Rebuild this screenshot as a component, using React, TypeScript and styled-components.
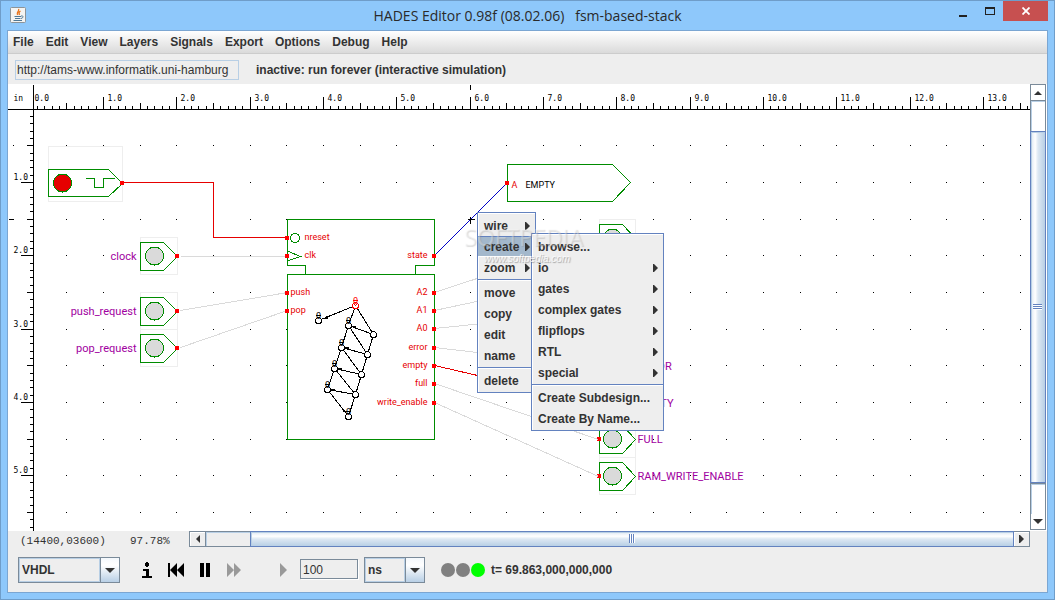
import React, { useLayoutEffect, useRef, useState } from "react";
import styled, { createGlobalStyle, css } from "styled-components";

const GlobalStyle = createGlobalStyle`
  *, *::before, *::after { box-sizing: border-box; }
  body { margin: 0; }
  button, input, select { font: inherit; color: inherit; margin: 0; padding: 0; border: 0; border-radius: 0; background: none; }
`;

const c = {
  frame: "#8ec8fb",
  frameLine: "#6f9dc9",
  panel: "#eeeeee",
  ink: "#333333",
  edge: "#7a8a99",
  accent: "#6382bf",
  soft: "#b8cfe5",
  highlight: "#a3b8cc",
  green: "#008c00",
  red: "#e60000",
  idle: "#dadada",
  label: "#a000a0",
};

/* ---------- window frame ---------- */

const Window = styled.div`
  display: flex;
  flex-direction: column;
  min-height: 100vh;
  padding: 0 6px 6px;
  background: ${c.frame};
  border: 1px solid ${c.frameLine};
  color: ${c.ink};
  font: bold 12px/16px "Liberation Sans", Arial, sans-serif;
`;

const TitleBar = styled.header`
  display: grid;
  grid-template-columns: 1fr auto 1fr;
  height: 29px;
`;

const AppIcon = styled.svg`
  margin: 6px 0 0 3px;
`;

const Title = styled.h1`
  margin: 0;
  color: #2a2a2a;
  font: 400 14px/30px "Open Sans", "Noto Sans", sans-serif;
  white-space: pre;
`;

const WindowButtons = styled.div`
  display: flex;
  justify-content: flex-end;
  height: 20px;
`;

const WindowButton = styled.button<{ $close?: boolean }>`
  display: flex;
  align-items: center;
  justify-content: center;
  width: ${(p) => (p.$close ? 45 : 27)}px;
  ${(p) => p.$close && "background: #c75050;"}
`;

const Content = styled.main`
  display: flex;
  flex: 1;
  flex-direction: column;
  background: ${c.panel};
  border: 1px solid #7ba6d2;
`;

const MenuBar = styled.nav`
  display: flex;
  gap: 12px;
  height: 23px;
  padding: 0 5px;
  background: linear-gradient(#ffffff, #dadada);
  border-bottom: 1px solid #cccccc;
`;

const MenuButton = styled.button`
  height: 21px;
`;

const AddressRow = styled.div`
  display: flex;
  align-items: center;
  gap: 17px;
  height: 30px;
  padding: 1px 0 0 7px;
`;

const AddressInput = styled.input`
  width: 224px;
  height: 20px;
  padding: 1px 1px 0;
  border: 1px solid ${c.soft};
  font-weight: 400;
`;

/* ---------- work area ---------- */

const WorkArea = styled.section`
  position: relative;
  display: flex;
  flex: 1;
  min-height: 200px;
  background: #ffffff;
`;

const Drawing = styled.svg`
  flex: 1;
  min-width: 0;
  overflow: hidden;
  shape-rendering: crispEdges;
  font: 400 11px Roboto, sans-serif;
`;

const Popup = styled.div<{ $x: number; $y: number; $width: number }>`
  position: absolute;
  left: ${(p) => p.$x}px;
  top: ${(p) => p.$y}px;
  width: ${(p) => p.$width}px;
  padding: 2px 0 1px;
  background: ${c.panel};
  border: 1px solid ${c.accent};
  box-shadow: inset 1px 1px #ffffff;
`;

const PopupItem = styled.button<{ $active?: boolean }>`
  display: flex;
  align-items: center;
  justify-content: space-between;
  width: 100%;
  height: 21px;
  padding: 0 5px 0 6px;
  white-space: nowrap;
  ${(p) =>
    p.$active &&
    css`
      background: ${c.highlight};
      box-shadow: inset 0 1px ${c.accent}, inset 0 -1px #ffffff;
    `}
`;

const PopupSeparator = styled.hr`
  height: 2px;
  margin: 1px 0;
  border: 0;
  border-top: 1px solid ${c.accent};
  background: #ffffff;
`;

const Watermark = styled.div`
  position: absolute;
  left: 456px;
  top: 140px;
  color: rgba(255, 255, 255, 0.3);
  font: 400 23px/26px "Open Sans", sans-serif;
  text-shadow: 1px 1px 1px rgba(120, 120, 120, 0.25);
  pointer-events: none;
`;

const WatermarkUrl = styled.div`
  padding-left: 20px;
  color: rgba(255, 255, 255, 0.8);
  font: italic 400 10px/18px "Liberation Sans", sans-serif;
  text-shadow: 1px 1px 1px rgba(90, 90, 90, 0.5);
`;

/* ---------- scroll bars ---------- */

const ScrollBar = styled.div<{ $vertical?: boolean }>`
  display: flex;
  border: 1px solid ${c.edge};
  ${(p) =>
    p.$vertical
      ? css`
          flex-direction: column;
          width: 16px;
          margin: 0 1px 1px 0;
        `
      : css`
          flex: 1;
          height: 16px;
          margin-right: 17px;
        `}
`;

const ScrollButton = styled.button`
  display: flex;
  flex: 0 0 15px;
  align-items: center;
  justify-content: center;
  box-shadow: inset 1px 1px #ffffff;
`;

const ScrollSpace = styled.div<{ $grow: number; $vertical?: boolean }>`
  flex: ${(p) => p.$grow} 1 0;
  box-shadow: inset 1px 1px ${c.soft};
  ${(p) => (p.$vertical ? `border-top: 1px solid ${c.edge};` : `border-left: 1px solid ${c.edge};`)}
`;

const ScrollThumb = styled.div<{ $grow: number; $vertical?: boolean }>`
  display: flex;
  flex: ${(p) => p.$grow} 1 0;
  align-items: center;
  justify-content: center;
  margin: ${(p) => (p.$vertical ? "0 -1px" : "-1px 0")};
  border: 1px solid ${c.accent};
  box-shadow: inset 1px 1px ${c.soft};
  background: linear-gradient(
    ${(p) => (p.$vertical ? "to right" : "to bottom")},
    #dde8f3, #ffffff 30%, #dde8f3 50%, #b8cfe5
  );
`;

/* ---------- status and controls ---------- */

const StatusRow = styled.div`
  display: flex;
  height: 17px;
`;

const StatusText = styled.span<{ $width: number }>`
  width: ${(p) => p.$width}px;
  padding-top: 2px;
  font: 400 11px/16px "Liberation Mono", monospace;
`;

const StatusGroup = styled.div`
  display: flex;
  width: 181px;
  padding-left: 12px;
`;

const Controls = styled.div`
  display: flex;
  align-items: center;
  height: 44px;
  padding-left: 10px;
`;

const Combo = styled.label<{ $width: number }>`
  display: flex;
  width: ${(p) => p.$width}px;
  height: 26px;
  border: 1px solid ${c.edge};
`;

const ComboSelect = styled.select`
  flex: 1;
  min-width: 0;
  padding-left: 2px;
  appearance: none;
  border: 1px solid ${c.soft};
  font-weight: 700;
`;

const ComboArrow = styled.span`
  display: flex;
  align-items: center;
  justify-content: center;
  width: 19px;
  border-left: 1px solid ${c.edge};
  background: linear-gradient(#f4f8fc, #ffffff 30%, #b8cfe5);
`;

const ToolButtons = styled.div`
  display: flex;
  align-items: center;
  gap: 9px;
  margin: 0 7px 0 17px;
`;

const ToolButton = styled.button<{ $apart?: boolean }>`
  display: flex;
  align-items: center;
  justify-content: center;
  width: 20px;
  height: 20px;
  margin-left: ${(p) => (p.$apart ? 20 : 0)}px;
  color: #000000;
  &:disabled { color: #999999; }
`;

const StepInput = styled.input`
  width: 58px;
  height: 20px;
  margin: 0 6px 2px 0;
  padding: 1px 2px 0;
  border: 1px solid ${c.edge};
  box-shadow: 1px 1px #ffffff;
  font-weight: 400;
`;

const Lamps = styled.div`
  display: flex;
  gap: 1px;
  margin: 0 6px 0 16px;
`;

const Lamp = styled.span<{ $on?: boolean }>`
  width: 14px;
  height: 14px;
  border-radius: 50%;
  background: ${(p) => (p.$on ? "#00ff00" : "#808080")};
`;

/* ---------- small drawings ---------- */

type Direction = "up" | "down" | "left" | "right";
const arrows: Record<Direction, [number, number, string]> = {
  up: [8, 4, "M0 4L4 0L8 4Z"],
  down: [10, 5, "M0 0H10L5 5Z"],
  left: [4, 8, "M4 0V8L0 4Z"],
  right: [5, 8, "M0 0V8H1L5 4L1 0Z"],
};

function Arrow({ to }: { to: Direction }) {
  const [w, h, d] = arrows[to];
  return (
    <svg width={w} height={h} aria-hidden="true">
      <path d={d} fill={c.ink} />
    </svg>
  );
}

function Grip({ vertical }: { vertical?: boolean }) {
  const line = (o: number) => (vertical ? `M0 ${o}.5H9` : `M${o}.5 0V9`);
  return (
    <svg width={vertical ? 10 : 6} height={vertical ? 6 : 10} aria-hidden="true">
      <path d={line(1) + line(3) + line(5)} stroke="#ffffff" />
      <path d={line(0) + line(2) + line(4)} stroke={c.accent} />
    </svg>
  );
}

/* ---------- schematic ---------- */

// The grid has two steps per inch; a screen inch is 73.33 pixels.
const INCH = 220 / 3;
const ORIGIN_X = 30.2;
const ORIGIN_Y = 109;

const gridX = (inches: number) => Math.floor(ORIGIN_X + inches * INCH);
const gridY = (inches: number) => Math.floor(ORIGIN_Y + inches * INCH);

type Extent = { right: number; bottom: number };

function Rulers({ right, bottom }: Extent) {
  let ticks = "";
  const size = (i: number) => (i % 10 === 0 ? 13 : i % 5 === 0 ? 7 : 4);
  for (let i = 1; gridX(i / 10) < right; i++) ticks += `M${gridX(i / 10)} 109v-${size(i)}`;
  for (let i = 1; gridY(i / 10) < bottom; i++) ticks += `M33 ${gridY(i / 10)}h-${size(i)}`;
  const across: number[] = [];
  for (let i = 0; gridX(i) + 26 < right; i++) across.push(i);
  const down: number[] = [];
  for (let i = 1; gridY(i) < bottom; i++) down.push(i);
  return (
    <g fontFamily="DejaVu Sans Mono, monospace" fontSize="8">
      <path d={`M0 109H${right}M33 84V${bottom}M470 84v5M8 219h5${ticks}`} stroke="#000" fill="none" />
      <text x="13" y="100">in</text>
      {across.map((i) => (
        <text key={i} x={gridX(i) + 4} y="100">{i}.0</text>
      ))}
      {down.map((i) => (
        <text key={i} x="13" y={gridY(i) - 3}>{i}.0</text>
      ))}
    </g>
  );
}

function GridDots({ right, bottom }: Extent) {
  let dots = "M12.5 145h1";
  for (let x = 1; gridX(x / 2) < right; x++)
    for (let y = 1; gridY(y / 2) < bottom; y++) dots += `M${gridX(x / 2) - 0.5} ${gridY(y / 2)}h1`;
  return <path d={dots} stroke="#000" />;
}

function Pin({ x, y }: { x: number; y: number }) {
  return <rect x={x - 1.5} y={y - 1.5} width="4" height="4" fill="#f00" />;
}

function Lead({ x, y, label, output }: { x: number; y: number; label: string; output?: boolean }) {
  const tip = output ? 13 : 14;
  return (
    <g>
      <rect x={x} y={y - 19} width={23 + tip} height="37" fill="#fff" stroke="#eee" />
      <path d={`M${x} ${y - 14}h23l${tip} 14l-${tip} 14h-23z`} fill="#fff" stroke={c.green} />
      <circle cx={x + tip} cy={y - 0.5} r="9" fill={c.idle} stroke={c.green} />
      <Pin x={output ? x - 1 : x + 36} y={y - 1} />
      <text x={output ? x + 38 : x - 4} y={y + 3} fill={c.label} textAnchor={output ? "start" : "end"}>
        {label}
      </text>
    </g>
  );
}

const ports: [string, number][] = [
  ["state", 255], ["A2", 292], ["A1", 310], ["A0", 328],
  ["error", 347], ["empty", 365], ["full", 383], ["write_enable", 402],
];

const states: [number, number, boolean][] = [
  [355, 305, true], [318, 320, true], [348, 325, true], [373, 334, false],
  [341, 347, true], [367, 354, false], [334, 368, true], [361, 374, false],
  [327, 389, true], [355, 394, false], [348, 416, true],
];
const transitions = [
  [0, 1], [0, 2], [0, 3], [2, 3], [2, 4], [3, 5], [2, 5], [4, 5], [4, 6], [4, 7],
  [5, 7], [6, 7], [6, 8], [6, 9], [7, 9], [8, 9], [8, 10], [9, 10],
];

function StateGraph() {
  return (
    <g fontSize="9" textAnchor="middle">
      <path
        d={transitions.map(([a, b]) => `M${states[a][0]} ${states[a][1]}L${states[b][0]} ${states[b][1]}`).join("")}
        stroke="#000"
      />
      <path d="M322 319l5 -4l1 3zM351 326l4 -1v3zM344 347l4 -1v3zM337 368l4 -1v3zM330 389l4 -1v3zM346 413l-4 -2l2 -2z" fill="#000" />
      {states.map(([x, y, named], i) => (
        <g key={i} fill={i === 0 ? "#f00" : "#000"}>
          <circle cx={x} cy={y} r="3" fill="#fff" stroke={i === 0 ? "#f00" : "#000"} />
          {named && <text x={x} y={y - 2}>0</text>}
          {named && <path d={`M${x - 3} ${y - 5}h5`} stroke={i === 0 ? "#f00" : "#000"} />}
        </g>
      ))}
      <path d="M354 304l2 2M356 304l-2 2" stroke="#f00" />
    </g>
  );
}

function Schematic() {
  const ref = useRef<SVGSVGElement>(null);
  const [extent, setExtent] = useState<Extent>({ right: 1030, bottom: 531 });

  // The rulers and the grid fill whatever room the window leaves.
  useLayoutEffect(() => {
    const svg = ref.current;
    if (!svg) return;
    const measure = () => {
      const box = svg.getBoundingClientRect();
      setExtent({ right: box.width + 8, bottom: box.height + 84 });
    };
    measure();
    const observer = new ResizeObserver(measure);
    observer.observe(svg);
    return () => observer.disconnect();
  }, []);

  return (
    <Drawing ref={ref} role="img" aria-label="Schematic of fsm-based-stack">
      <g transform="translate(-7.5 -83.5)">
        <GridDots {...extent} />
        <Rulers {...extent} />

        <rect x="48" y="146" width="74" height="55" fill="#fff" stroke="#eee" />
        <path d="M48 169H108L122 183L108 196H48Z" fill="#fff" stroke={c.green} />
        <circle cx="62" cy="182.5" r="9" fill={c.red} stroke={c.green} />
        <path d="M85 178H94V187H103V178H114" fill="none" stroke={c.green} />

        <Lead x={140} y={256} label="clock" />
        <Lead x={140} y={311} label="push_request" />
        <Lead x={140} y={348} label="pop_request" />
        <Lead x={599} y={238} label="A2" output />
        <Lead x={599} y={366} label="ERROR" output />
        <Lead x={599} y={403} label="EMPTY" output />
        <Lead x={599} y={439} label="FULL" output />
        <Lead x={599} y={476} label="RAM_WRITE_ENABLE" output />

        <path
          d="M180 256H287M180 310L287 292M180 347L287 310M434 292L598 238M434 310L598 275M434 328L598 311M434 347L598 366M434 383L598 439M434 402L598 476"
          stroke={c.idle}
          fill="none"
        />
        <path d="M287 219H434V265H415V274H305V265H287Z" fill="#fff" stroke={c.green} />
        <rect x="287" y="274" width="147" height="165" fill="#fff" stroke={c.green} />
        <path d="M122 182H213V237H287M434 365L598 403" fill="none" stroke={c.red} />
        <circle cx="294.5" cy="237.5" r="4.5" fill="none" stroke={c.green} />
        <path d="M288 251L300 256L288 260" fill="none" stroke={c.green} />

        <path d="M507 164H612L630 182L612 201H507Z" fill="#fff" stroke={c.green} />
        <path d="M434 255L507 182" stroke="#0000c8" />
        <path d="M467 219h7M470 216v7" stroke="#000" />

        <Pin x={121} y={182} />
        <Pin x={506} y={182} />
        <g fontSize="9" fill="#e60000">
          {ports.map(([name, y]) => (
            <g key={name}>
              <Pin x={433} y={y} />
              <text x="427" y={y + 2} textAnchor="end">{name}</text>
            </g>
          ))}
          {[237, 255, 292, 310].map((y) => (
            <Pin key={y} x={286} y={y} />
          ))}
          <text x="304" y="239">nreset</text>
          <text x="304" y="257">clk</text>
          <text x="290" y="294">push</text>
          <text x="290" y="312">pop</text>
          <text x="511" y="187">A</text>
          <text x="525" y="187" fill="#000">EMPTY</text>
        </g>
        <StateGraph />
      </g>
    </Drawing>
  );
}

/* ---------- popup menus ---------- */

type Entry = { text: string; sub?: boolean; active?: boolean } | null;

const nodeMenu: Entry[] = [
  { text: "wire", sub: true },
  { text: "create", sub: true, active: true },
  { text: "zoom", sub: true },
  null,
  { text: "move" }, { text: "copy" }, { text: "edit" }, { text: "name" },
  null,
  { text: "delete" },
];

const createMenu: Entry[] = [
  { text: "browse..." },
  { text: "io", sub: true },
  { text: "gates", sub: true },
  { text: "complex gates", sub: true },
  { text: "flipflops", sub: true },
  { text: "RTL", sub: true },
  { text: "special", sub: true },
  null,
  { text: "Create Subdesign..." },
  { text: "Create By Name..." },
];

function PopupMenu({ entries, x, y, width }: { entries: Entry[]; x: number; y: number; width: number }) {
  return (
    <Popup role="menu" $x={x} $y={y} $width={width}>
      {entries.map((e, i) =>
        e ? (
          <PopupItem key={i} role="menuitem" $active={e.active} aria-haspopup={e.sub ? "menu" : undefined}>
            {e.text}
            {e.sub && <Arrow to="right" />}
          </PopupItem>
        ) : (
          <PopupSeparator key={i} />
        ),
      )}
    </Popup>
  );
}

const menus = ["File", "Edit", "View", "Layers", "Signals", "Export", "Options", "Debug", "Help"];

export default function App() {
  return (
    <Window>
      <GlobalStyle />
      <TitleBar>
        <AppIcon width="16" height="16" aria-hidden="true">
          <rect x="0.5" y="0.5" width="15" height="15" rx="1" fill="#f4f4f2" stroke="#8c9499" />
          <path d="M8.5 2C10 4 6 5 7.5 8M10.5 4C8 5 9 6.5 9.5 8" fill="none" stroke="#e8731a" strokeWidth="1.3" />
          <path d="M4.5 9.5H11M5 11.5H10.5M3.5 13.5H12M11 9C14 8.5 13.5 11 11 11.5" fill="none" stroke="#4e7896" />
        </AppIcon>
        <Title>{"HADES Editor 0.98f (08.02.06)   fsm-based-stack"}</Title>
        <WindowButtons>
          <WindowButton aria-label="Minimize">
            <svg width="8" height="12"><path d="M0 10H8V12H0Z" fill="#222" /></svg>
          </WindowButton>
          <WindowButton aria-label="Maximize">
            <svg width="10" height="8"><path d="M0 0H10V8H0ZM1 2V7H9V2Z" fillRule="evenodd" fill="#222" /></svg>
          </WindowButton>
          <WindowButton $close aria-label="Close">
            <svg width="8" height="8"><path d="M0.5 0.5L7.5 7.5M7.5 0.5L0.5 7.5" stroke="#fff" strokeWidth="1.8" /></svg>
          </WindowButton>
        </WindowButtons>
      </TitleBar>

      <Content>
        <MenuBar>
          {menus.map((m) => (
            <MenuButton key={m}>{m}</MenuButton>
          ))}
        </MenuBar>

        <AddressRow>
          <AddressInput aria-label="Design address" defaultValue="http://tams-www.informatik.uni-hamburg" />
          <span>inactive: run forever (interactive simulation)</span>
        </AddressRow>

        <WorkArea>
          <Schematic />
          <ScrollBar $vertical>
            <ScrollButton aria-label="Scroll up"><Arrow to="up" /></ScrollButton>
            <ScrollSpace $vertical $grow={30} />
            <ScrollThumb $vertical $grow={353}><Grip vertical /></ScrollThumb>
            <ScrollSpace $vertical $grow={30} />
            <ScrollButton aria-label="Scroll down"><Arrow to="down" /></ScrollButton>
          </ScrollBar>
          <PopupMenu entries={nodeMenu} x={469} y={128} width={59} />
          <PopupMenu entries={createMenu} x={523} y={149} width={133} />
          <Watermark aria-hidden="true">
            SOFTPEDIA
            <WatermarkUrl>www.softpedia.com</WatermarkUrl>
          </Watermark>
        </WorkArea>

        <StatusRow>
          <StatusGroup>
            <StatusText $width={110}>(14400,03600)</StatusText>
            <StatusText $width={50}>97.78%</StatusText>
          </StatusGroup>
          <ScrollBar>
            <ScrollButton aria-label="Scroll left"><Arrow to="left" /></ScrollButton>
            <ScrollSpace $grow={44} />
            <ScrollThumb $grow={765}><Grip /></ScrollThumb>
            <ScrollButton aria-label="Scroll right"><Arrow to="right" /></ScrollButton>
          </ScrollBar>
        </StatusRow>

        <Controls>
          <Combo $width={102}>
            <ComboSelect aria-label="Language"><option>VHDL</option></ComboSelect>
            <ComboArrow><Arrow to="down" /></ComboArrow>
          </Combo>
          <ToolButtons>
            <ToolButton aria-label="Info">
              <svg width="10" height="16" fill="currentColor"><path d="M3 1H4V0H6V1H7V4H6V5H4V4H3ZM1 7H7V14H10V16H0V14H4V9H1Z" /></svg>
            </ToolButton>
            <ToolButton aria-label="Rewind">
              <svg width="16" height="14" fill="currentColor"><path d="M0 0H2V14H0ZM9 0V14L2 7ZM16 0V14L9 7Z" /></svg>
            </ToolButton>
            <ToolButton aria-label="Pause">
              <svg width="10" height="14" fill="currentColor"><path d="M0 0H4V14H0ZM6 0H10V14H6Z" /></svg>
            </ToolButton>
            <ToolButton aria-label="Fast forward" disabled>
              <svg width="14" height="14" fill="currentColor"><path d="M0 0L7 7L0 14ZM7 0L14 7L7 14Z" /></svg>
            </ToolButton>
            <ToolButton aria-label="Step" $apart disabled>
              <svg width="7" height="14" fill="currentColor"><path d="M0 0L7 7L0 14Z" /></svg>
            </ToolButton>
          </ToolButtons>
          <StepInput aria-label="Step size" defaultValue="100" />
          <Combo $width={61}>
            <ComboSelect aria-label="Time unit"><option>ns</option></ComboSelect>
            <ComboArrow><Arrow to="down" /></ComboArrow>
          </Combo>
          <Lamps>
            <Lamp />
            <Lamp />
            <Lamp $on />
          </Lamps>
          <output>t= 69.863,000,000,000</output>
        </Controls>
      </Content>
    </Window>
  );
}
